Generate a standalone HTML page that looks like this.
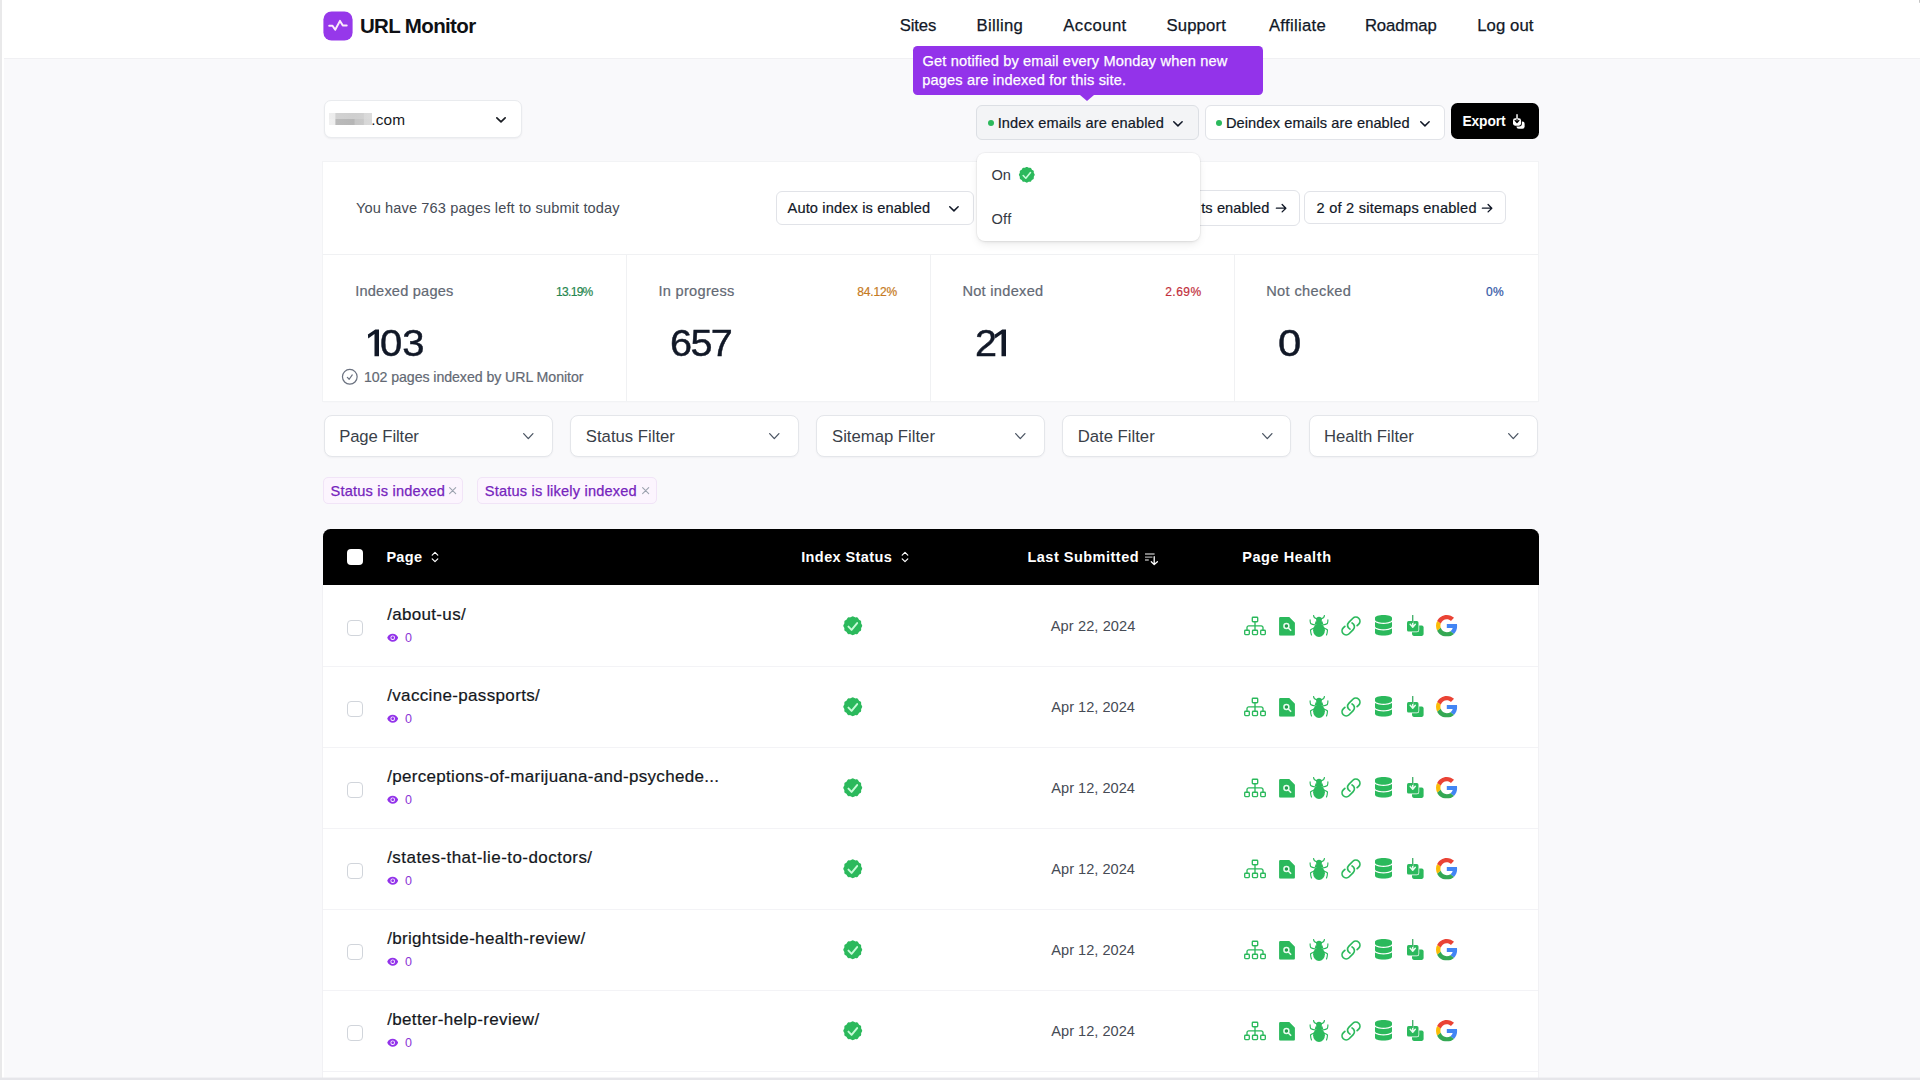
<!DOCTYPE html>
<html lang="en">
<head>
<meta charset="utf-8">
<title>URL Monitor</title>
<style>
*{box-sizing:border-box;margin:0;padding:0}
html,body{width:1920px;height:1080px;overflow:hidden}
body{font-family:"Liberation Sans",sans-serif;background:#f9f9fb;color:#111827;position:relative}
.abs{position:absolute}
.t{position:absolute;white-space:nowrap}
svg{display:block;overflow:visible}
.btn{position:absolute;border:1px solid #e1e3e8;border-radius:6px;background:#fff}
.dot{position:absolute;width:6.4px;height:6.4px;border-radius:50%;background:#2bb95c}
.vdiv{position:absolute;top:254.5px;width:1px;height:146.5px;background:#f0f1f3}
.filt{position:absolute;top:415.4px;width:229px;height:41.6px;border:1px solid #e4e6ea;border-radius:8px;background:#fff;box-shadow:0 1px 2px rgba(16,24,40,.04)}
.chip{position:absolute;top:477.4px;height:27px;border:1px solid #f1e4f7;border-radius:5px;background:#fcf5fe}
.row{position:absolute;left:0;width:1215px;height:81px;border-bottom:1px solid #f3f3f6}
.cb{position:absolute;left:24.100px;top:34.200px;width:15.800px;height:15.800px;border:1px solid #d1d5db;border-radius:4px;background:#fff}
</style>
</head>
<body>

<div class="abs" style="left:0;top:0;width:1920px;height:58.5px;background:#fff;border-bottom:1px solid #f0f0f3"></div>
<div class="abs" style="left:0;top:0;width:2px;height:1080px;background:#e9e9ea"></div>
<div class="abs" style="left:2px;top:0;width:1.700px;height:1078px;background:#fff"></div>
<div class="abs" style="left:1918.600px;top:0;width:1.400px;height:3px;background:#b5b5b5;border-radius:0 0 0 2px;opacity:.8"></div>
<svg class="abs" style="left:323px;top:11px" width="31" height="31" viewBox="0 0 31 31"><rect x=".4" y=".4" width="29.200" height="29.200" rx="8.200" fill="#9638ea"/><path d="M6.200 14.800h3.300l2.700 4 4.800-8.900 2.800 4.700h3.900" fill="none" stroke="#fbe9fb" stroke-width="2" stroke-linecap="round" stroke-linejoin="round"/></svg>
<div class="t" style="left:359.96px;top:12.5px;font-size:20.5px;line-height:26px;color:#0f1115;font-weight:700;letter-spacing:-0.64px;">URL Monitor</div>
<div class="t" style="left:899.63px;top:16.41px;font-size:16.7px;line-height:20px;color:#111827;letter-spacing:-0.09px;-webkit-text-stroke:0.25px #111827;">Sites</div>
<div class="t" style="left:976.53px;top:16.41px;font-size:16.7px;line-height:20px;color:#111827;letter-spacing:0.29px;-webkit-text-stroke:0.25px #111827;">Billing</div>
<div class="t" style="left:1063.3px;top:16.41px;font-size:16.7px;line-height:20px;color:#111827;letter-spacing:0.44px;-webkit-text-stroke:0.25px #111827;">Account</div>
<div class="t" style="left:1166.43px;top:16.41px;font-size:16.7px;line-height:20px;color:#111827;letter-spacing:0.165px;-webkit-text-stroke:0.25px #111827;">Support</div>
<div class="t" style="left:1268.9px;top:16.41px;font-size:16.7px;line-height:20px;color:#111827;letter-spacing:0.3px;-webkit-text-stroke:0.25px #111827;">Affiliate</div>
<div class="t" style="left:1364.93px;top:16.41px;font-size:16.7px;line-height:20px;color:#111827;letter-spacing:-0.1px;-webkit-text-stroke:0.25px #111827;">Roadmap</div>
<div class="t" style="left:1477.13px;top:16.41px;font-size:16.7px;line-height:20px;color:#111827;letter-spacing:0.1px;-webkit-text-stroke:0.25px #111827;">Log out</div>
<div class="btn" style="left:324px;top:99.600px;width:198.300px;height:38.600px;border-radius:7px;border-color:#e9ebee;box-shadow:0 1px 2px rgba(16,24,40,.05)"></div>
<div class="abs" style="left:329.300px;top:113px;width:42.700px;height:6px;background:linear-gradient(90deg,#eeeeee 0,#ececec 14.5%,#d2d2d2 15.5%,#cfcfcf 55%,#d1d1d1 80%,#d9d9d9 82%,#dcdcdc 100%);filter:blur(.4px)"></div>
<div class="abs" style="left:329.300px;top:119px;width:42.700px;height:6px;background:linear-gradient(90deg,#f0f0f0 0,#eeeeee 14.5%,#bababa 15.5%,#b6b6b6 58%,#c6c6c6 61%,#c9c9c9 80%,#d7d7d7 82%,#dadada 100%);filter:blur(.4px)"></div>
<div class="t" style="left:371.3px;top:109.76px;font-size:15.4px;line-height:20px;color:#16181d;letter-spacing:0.1px;">.com</div>
<svg class="abs" style="left:496.0px;top:117.05px" width="10" height="5.9" viewBox="0 0 10 5.9"><path d="M0.85 0.85L5.0 4.84L9.15 0.85" fill="none" stroke="#1a1d23" stroke-width="1.7" stroke-linecap="round" stroke-linejoin="round"/></svg>
<div class="btn" style="left:976.400px;top:105.400px;width:222.800px;height:34.800px;background:#f3f4f6;border-color:#dcdfe4"></div>
<div class="dot" style="left:987.800px;top:119.800px"></div>
<div class="t" style="left:997.68px;top:112.54px;font-size:14.6px;line-height:20px;color:#111827;letter-spacing:0.137px;-webkit-text-stroke:0.2px #111827;">Index emails are enabled</div>
<svg class="abs" style="left:1173.35px;top:121.1px" width="9.9" height="5.8" viewBox="0 0 9.9 5.8"><path d="M0.75 0.75L4.95 4.86L9.15 0.75" fill="none" stroke="#111827" stroke-width="1.5" stroke-linecap="round" stroke-linejoin="round"/></svg>
<div class="btn" style="left:1204.800px;top:105.400px;width:240.400px;height:34.800px"></div>
<div class="dot" style="left:1216px;top:119.800px"></div>
<div class="t" style="left:1225.88px;top:112.54px;font-size:14.6px;line-height:20px;color:#111827;letter-spacing:0.11px;-webkit-text-stroke:0.2px #111827;">Deindex emails are enabled</div>
<svg class="abs" style="left:1419.55px;top:121.1px" width="9.9" height="5.8" viewBox="0 0 9.9 5.8"><path d="M0.75 0.75L4.95 4.86L9.15 0.75" fill="none" stroke="#111827" stroke-width="1.5" stroke-linecap="round" stroke-linejoin="round"/></svg>
<div class="abs" style="left:1451.200px;top:102.900px;width:87.900px;height:35.900px;background:#000;border-radius:6.500px"></div>
<div class="t" style="left:1462.43px;top:111.52px;font-size:13.8px;line-height:20px;color:#fff;font-weight:700;letter-spacing:-0.1px;">Export</div>
<svg class="abs" style="left:1513.200px;top:113.900px" width="11.900" height="14.850" viewBox="0 0 17 21"><rect x="5" y="10.600" width="11.600" height="10.300" rx="3.200" fill="#fff"/><rect x="-1.200" y="4.900" width="13.900" height="12.900" rx="3.800" fill="#000"/><rect x="0" y="6.100" width="11.500" height="10.500" rx="3" fill="#fff"/><path d="M5.750 6.100v5.500M3 9l2.750 3.200L8.500 9" fill="none" stroke="#000" stroke-width="1.800" stroke-linecap="round" stroke-linejoin="round"/><path d="M5.750 .8v5.600" stroke="#fff" stroke-width="2.100" stroke-linecap="round"/></svg>
<div class="abs" style="left:323.300px;top:162px;width:1215.100px;height:239px;background:#fff;box-shadow:0 0 0 1px #f2f3f5,0 1px 2px rgba(16,24,40,.03)"></div>
<div class="abs" style="left:323.300px;top:254px;width:1215.100px;height:1px;background:#f0f1f3"></div>
<div class="vdiv" style="left:625.8px"></div>
<div class="vdiv" style="left:930.1px"></div>
<div class="vdiv" style="left:1234.4px"></div>
<div class="t" style="left:355.9px;top:198.14px;font-size:14.6px;line-height:20px;color:#464b55;letter-spacing:0.121px;">You have 763 pages left to submit today</div>
<div class="btn" style="left:775.700px;top:190.800px;width:198.300px;height:34.200px"></div>
<div class="t" style="left:787.5px;top:198.24px;font-size:14.6px;line-height:20px;color:#111827;letter-spacing:0.153px;-webkit-text-stroke:0.2px #111827;">Auto index is enabled</div>
<svg class="abs" style="left:948.55px;top:205.6px" width="9.9" height="5.8" viewBox="0 0 9.9 5.8"><path d="M0.75 0.75L4.95 4.86L9.15 0.75" fill="none" stroke="#111827" stroke-width="1.5" stroke-linecap="round" stroke-linejoin="round"/></svg>
<div class="btn" style="left:1100px;top:190.300px;width:200px;height:35.300px"></div>
<div class="t" style="left:1201.2px;top:198.34px;font-size:14.6px;line-height:20px;color:#111827;letter-spacing:0.1px;-webkit-text-stroke:0.2px #111827;">ts enabled</div>
<svg class="abs" style="left:1275.25px;top:203.3px" width="12.35" height="10.4" viewBox="-1 -1 12.35 10.4"><path d="M0.4 4.2H9.75M6.15 0.5L9.85 4.2L6.15 7.9" fill="none" stroke="#111827" stroke-width="1.35" stroke-linecap="round" stroke-linejoin="round"/></svg>
<div class="btn" style="left:1304.400px;top:191.250px;width:201.600px;height:32.250px"></div>
<div class="t" style="left:1316.52px;top:198.34px;font-size:14.6px;line-height:20px;color:#111827;letter-spacing:0.23px;-webkit-text-stroke:0.2px #111827;">2 of 2 sitemaps enabled</div>
<svg class="abs" style="left:1481px;top:203.3px" width="12.3" height="10.4" viewBox="-1 -1 12.3 10.4"><path d="M0.4 4.2H9.7M6.1 0.5L9.8 4.2L6.1 7.9" fill="none" stroke="#111827" stroke-width="1.35" stroke-linecap="round" stroke-linejoin="round"/></svg>
<div class="t" style="left:355.18px;top:281.74px;font-size:14.6px;line-height:18px;color:#636974;letter-spacing:0.2px;-webkit-text-stroke:0.2px #636974;">Indexed pages</div>
<div class="t" style="left:658.38px;top:281.74px;font-size:14.6px;line-height:18px;color:#636974;letter-spacing:0.3px;-webkit-text-stroke:0.2px #636974;">In progress</div>
<div class="t" style="left:962.38px;top:281.74px;font-size:14.6px;line-height:18px;color:#636974;letter-spacing:0.293px;-webkit-text-stroke:0.2px #636974;">Not indexed</div>
<div class="t" style="left:1266.18px;top:281.74px;font-size:14.6px;line-height:18px;color:#636974;letter-spacing:0.36px;-webkit-text-stroke:0.2px #636974;">Not checked</div>
<div class="t" style="left:512.6px;width:80px;text-align:right;top:283.64px;font-size:12px;line-height:16px;color:#27874f;letter-spacing:-0.7px;-webkit-text-stroke:0.2px #27874f">13.19%</div>
<div class="t" style="left:817.05px;width:80px;text-align:right;top:283.64px;font-size:12px;line-height:16px;color:#c67a22;letter-spacing:-0.15px;-webkit-text-stroke:0.2px #c67a22">84.12%</div>
<div class="t" style="left:1121.7px;width:80px;text-align:right;top:283.64px;font-size:12px;line-height:16px;color:#c2303c;letter-spacing:0.5px;-webkit-text-stroke:0.2px #c2303c">2.69%</div>
<div class="t" style="left:1424.0px;width:80px;text-align:right;top:283.64px;font-size:12px;line-height:16px;color:#3156a6;letter-spacing:0.3px;-webkit-text-stroke:0.2px #3156a6">0%</div>
<svg class="abs" style="left:367.0px;top:328.7px" width="12.5" height="27.7" viewBox="0 -0.5 12.5 27.7"><path fill="#111827" d="M12.0 0H8.3L0.9000000000000004 5L1.1999999999999993 8.900L7.5 4.600V26.7H12.0z"/></svg>
<div class="t" style="left:380.29px;top:320.74px;font-size:37.400px;line-height:44px;color:#111827;transform:scaleX(1.07);transform-origin:0 0;-webkit-text-stroke:0.45px #111827">03</div>
<div class="t" style="left:670.17px;top:320.74px;font-size:37.400px;line-height:44px;color:#111827;letter-spacing:-1.55px;transform:scaleX(1.06);transform-origin:0 0;-webkit-text-stroke:0.45px #111827">657</div>
<div class="t" style="left:974.79px;top:320.74px;font-size:37.400px;line-height:44px;color:#111827;transform:scaleX(1.06);transform-origin:0 0;-webkit-text-stroke:0.45px #111827">2</div>
<svg class="abs" style="left:994.0px;top:328.7px" width="12.5" height="27.7" viewBox="0 -0.5 12.5 27.7"><path fill="#111827" d="M12.0 0H8.3L0.9000000000000004 5L1.1999999999999993 8.900L7.5 4.600V26.7H12.0z"/></svg>
<div class="t" style="left:1277.91px;top:320.74px;font-size:37.400px;line-height:44px;color:#111827;transform:scaleX(1.12);transform-origin:0 0;-webkit-text-stroke:0.45px #111827">0</div>
<svg class="abs" style="left:340.350px;top:367.200px" width="19.600" height="19.600" viewBox="0 0 24 24"><path d="M9 12.750L11.250 15 15 9.750M21 12a9 9 0 11-18 0 9 9 0 0118 0z" fill="none" stroke="#6b7280" stroke-width="1.500" stroke-linecap="round" stroke-linejoin="round"/></svg>
<div class="t" style="left:363.9px;top:367.78px;font-size:14.2px;line-height:18px;color:#636974;letter-spacing:-0.075px;-webkit-text-stroke:0.2px #636974;">102 pages indexed by URL Monitor</div>
<div class="filt" style="left:323.7px"></div>
<div class="t" style="left:339.13px;top:426.41px;font-size:16.7px;line-height:22px;color:#3a3f49;letter-spacing:-0.09px;">Page Filter</div>
<svg class="abs" style="left:522.9px;top:433.1px" width="10.6" height="6.4" viewBox="0 0 10.6 6.4"><path d="M0.65 0.65L5.3 5.59L9.95 0.65" fill="none" stroke="#4b5563" stroke-width="1.3" stroke-linecap="round" stroke-linejoin="round"/></svg>
<div class="filt" style="left:569.9px"></div>
<div class="t" style="left:585.83px;top:426.41px;font-size:16.7px;line-height:22px;color:#3a3f49;">Status Filter</div>
<svg class="abs" style="left:769.1px;top:433.1px" width="10.6" height="6.4" viewBox="0 0 10.6 6.4"><path d="M0.65 0.65L5.3 5.59L9.95 0.65" fill="none" stroke="#4b5563" stroke-width="1.3" stroke-linecap="round" stroke-linejoin="round"/></svg>
<div class="filt" style="left:816.1px"></div>
<div class="t" style="left:832.03px;top:426.41px;font-size:16.7px;line-height:22px;color:#3a3f49;">Sitemap Filter</div>
<svg class="abs" style="left:1015.3px;top:433.1px" width="10.6" height="6.4" viewBox="0 0 10.6 6.4"><path d="M0.65 0.65L5.3 5.59L9.95 0.65" fill="none" stroke="#4b5563" stroke-width="1.3" stroke-linecap="round" stroke-linejoin="round"/></svg>
<div class="filt" style="left:1062.3px"></div>
<div class="t" style="left:1077.73px;top:426.41px;font-size:16.7px;line-height:22px;color:#3a3f49;">Date Filter</div>
<svg class="abs" style="left:1261.5px;top:433.1px" width="10.6" height="6.4" viewBox="0 0 10.6 6.4"><path d="M0.65 0.65L5.3 5.59L9.95 0.65" fill="none" stroke="#4b5563" stroke-width="1.3" stroke-linecap="round" stroke-linejoin="round"/></svg>
<div class="filt" style="left:1308.5px"></div>
<div class="t" style="left:1323.93px;top:426.41px;font-size:16.7px;line-height:22px;color:#3a3f49;">Health Filter</div>
<svg class="abs" style="left:1507.7px;top:433.1px" width="10.6" height="6.4" viewBox="0 0 10.6 6.4"><path d="M0.65 0.65L5.3 5.59L9.95 0.65" fill="none" stroke="#4b5563" stroke-width="1.3" stroke-linecap="round" stroke-linejoin="round"/></svg>
<div class="chip" style="left:323.300px;width:140.200px"></div>
<div class="t" style="left:330.52px;top:480.54px;font-size:14.6px;line-height:20px;color:#7624bd;letter-spacing:0.2px;-webkit-text-stroke:0.25px #7624bd;">Status is indexed</div>
<div class="chip" style="left:477.300px;width:179.400px"></div>
<div class="t" style="left:484.72px;top:480.54px;font-size:14.6px;line-height:20px;color:#7624bd;letter-spacing:0.19px;-webkit-text-stroke:0.25px #7624bd;">Status is likely indexed</div>
<svg class="abs" style="left:449.3px;top:487.25px" width="7.300" height="7.300" viewBox="0 0 7.300 7.300"><path d="M.6.6l6.100 6.100M6.700.6L.6 6.700" stroke="#9ca3af" stroke-width="1.100" stroke-linecap="round"/></svg>
<svg class="abs" style="left:642.3px;top:487.25px" width="7.300" height="7.300" viewBox="0 0 7.300 7.300"><path d="M.6.6l6.100 6.100M6.700.6L.6 6.700" stroke="#9ca3af" stroke-width="1.100" stroke-linecap="round"/></svg>
<svg width="0" height="0" style="position:absolute">
<defs>
<symbol id="i-badge" viewBox="0 0 24 24"><path fill="#2bb95c" d="M12.00 2.32L12.63 2.45L13.21 2.78L13.76 3.14L14.31 3.38L14.90 3.45L15.56 3.41L16.23 3.42L16.84 3.62L17.32 4.04L17.66 4.62L17.95 5.21L18.31 5.69L18.79 6.05L19.38 6.34L19.96 6.68L20.38 7.16L20.58 7.77L20.59 8.44L20.55 9.10L20.62 9.69L20.86 10.24L21.22 10.79L21.55 11.37L21.68 12.00L21.55 12.63L21.22 13.21L20.86 13.76L20.62 14.31L20.55 14.90L20.59 15.56L20.58 16.23L20.38 16.84L19.96 17.32L19.38 17.66L18.79 17.95L18.31 18.31L17.95 18.79L17.66 19.38L17.32 19.96L16.84 20.38L16.23 20.58L15.56 20.59L14.90 20.55L14.31 20.62L13.76 20.86L13.21 21.22L12.63 21.55L12.00 21.68L11.37 21.55L10.79 21.22L10.24 20.86L9.69 20.62L9.10 20.55L8.44 20.59L7.77 20.58L7.16 20.38L6.68 19.96L6.34 19.38L6.05 18.79L5.69 18.31L5.21 17.95L4.62 17.66L4.04 17.32L3.62 16.84L3.42 16.23L3.41 15.56L3.45 14.90L3.38 14.31L3.14 13.76L2.78 13.21L2.45 12.63L2.32 12.00L2.45 11.37L2.78 10.79L3.14 10.24L3.38 9.69L3.45 9.10L3.41 8.44L3.42 7.77L3.62 7.16L4.04 6.68L4.62 6.34L5.21 6.05L5.69 5.69L6.05 5.21L6.34 4.62L6.68 4.04L7.16 3.62L7.77 3.42L8.44 3.41L9.10 3.45L9.69 3.38L10.24 3.14L10.79 2.78L11.37 2.45z"/><path d="M7.600 12.900l3.200 3.300 5.700-6.900" fill="none" stroke="#c6fbd7" stroke-width="2" stroke-linecap="round" stroke-linejoin="round"/></symbol>
<symbol id="i-eye" viewBox="0 0 20 20"><path fill="#9333ea" d="M10 12.500a2.500 2.500 0 100-5 2.500 2.500 0 000 5z"/><path fill="#9333ea" fill-rule="evenodd" d="M.664 10.590a1.651 1.651 0 010-1.186A10.004 10.004 0 0110 3c4.257 0 7.893 2.660 9.336 6.410.147.381.146.804 0 1.186A10.004 10.004 0 0110 17c-4.257 0-7.893-2.660-9.336-6.410zM14 10a4 4 0 11-8 0 4 4 0 018 0z"/></symbol>
<symbol id="i-sitemap" viewBox="0 0 24 20"><g fill="none" stroke="#2bb95c" stroke-width="1.350" stroke-linejoin="round"><rect x="9.300" y="1.200" width="5.400" height="4.500" rx=".8"/><rect x="1.700" y="14.200" width="4.600" height="4.400" rx=".8"/><rect x="9.500" y="14.200" width="5" height="4.400" rx=".8"/><rect x="17.700" y="14.200" width="4.600" height="4.400" rx=".8"/><path d="M12 5.700v8.500M4 14.200v-2.600a1.700 1.700 0 011.700-1.700h12.600a1.700 1.700 0 011.700 1.700v2.600"/></g></symbol>
<symbol id="i-file" viewBox="0 0 16 19"><path fill="#2bb95c" d="M1.300 0h9L16 5.700v11.900a1.300 1.300 0 01-1.300 1.300H1.300A1.300 1.300 0 010 17.600V1.300A1.300 1.300 0 011.300 0z"/><circle cx="7.400" cy="9.100" r="2.500" fill="#1f9c4a" stroke="#e9fbef" stroke-width="1.500"/><path d="M9.400 11.100l2.300 2.300" stroke="#e9fbef" stroke-width="1.700" stroke-linecap="round"/></symbol>
<symbol id="i-bug" viewBox="0 0 20 22"><g fill="#2bb95c"><circle cx="10" cy="4.700" r="2.900"/><path d="M6.600 6.200h6.800l1 3.200H5.600z"/><ellipse cx="10" cy="15.200" rx="5.900" ry="6.800"/></g><g fill="none" stroke="#2bb95c" stroke-width="1.150" stroke-linecap="round" stroke-linejoin="round"><path d="M7.600 3.600C5.600 3.300 4.700 2.200 4.600.5M12.400 3.600c2-.3 2.900-1.400 3-3.100"/><path d="M6.500 10C4.500 9.800 2.600 9.400 1.700 8.500 1.200 7.400 1.100 6.200 1.100 4.900M13.500 10c2-.2 3.900-.6 4.800-1.500.5-1.100.6-2.300.6-3.600"/><path d="M4.800 13.200c-1.300.4-2.500 1-3.300 1.800.1 1.800.4 3.400 1 5M15.200 13.200c1.300.4 2.500 1 3.300 1.800-.1 1.800-.4 3.400-1 5"/></g></symbol>
<symbol id="i-link" viewBox="0 0 24 24"><path fill="none" stroke="#2bb95c" stroke-width="1.850" stroke-linecap="round" stroke-linejoin="round" d="M13.190 8.688a4.500 4.500 0 011.242 7.244l-4.500 4.500a4.500 4.500 0 01-6.364-6.364l1.757-1.757m13.350-.622l1.757-1.757a4.500 4.500 0 00-6.364-6.364l-4.500 4.500a4.500 4.500 0 001.242 7.244"/></symbol>
<symbol id="i-db" viewBox="0 0 448 512"><path fill="#2bb95c" d="M448 73.143v45.714C448 159.143 347.667 192 224 192S0 159.143 0 118.857V73.143C0 32.857 100.333 0 224 0s224 32.857 224 73.143zM448 176v102.857C448 319.143 347.667 352 224 352S0 319.143 0 278.857V176c48.125 33.143 136.208 48.572 224 48.572S399.874 209.143 448 176zm0 160v102.857C448 479.143 347.667 512 224 512S0 479.143 0 438.857V336c48.125 33.143 136.208 48.572 224 48.572S399.874 369.143 448 336z"/></symbol>
<symbol id="i-dl" viewBox="0 0 17 21"><rect x="5" y="10.600" width="11.600" height="10.300" rx="1.800" fill="#2bb95c"/><rect x="-.7" y="5.400" width="12.900" height="11.900" rx="2.200" fill="#fff"/><rect x="0" y="6.100" width="11.500" height="10.500" rx="1.600" fill="#2bb95c"/><path d="M5.750 6.100v5.500M3.200 9.300l2.550 2.900 2.550-2.900" fill="none" stroke="#e9fbef" stroke-width="1.500" stroke-linecap="round" stroke-linejoin="round"/><path d="M5.750 .3v7.200" stroke="#23a350" stroke-width="1.150" stroke-linecap="round"/></symbol>
<symbol id="i-g" viewBox="0 0 48 48"><path fill="#EA4335" d="M24 9.500c3.540 0 6.710 1.220 9.210 3.600l6.850-6.850C35.900 2.380 30.470 0 24 0 14.620 0 6.510 5.380 2.560 13.220l7.980 6.190C12.430 13.720 17.740 9.500 24 9.500z"/><path fill="#4285F4" d="M46.980 24.550c0-1.570-.15-3.090-.38-4.550H24v9.020h12.940c-.58 2.960-2.260 5.480-4.780 7.180l7.730 6c4.510-4.180 7.090-10.360 7.090-17.650z"/><path fill="#FBBC05" d="M10.530 28.590c-.48-1.450-.76-2.990-.76-4.590s.27-3.140.76-4.590l-7.980-6.190C.92 16.460 0 20.120 0 24c0 3.880.92 7.540 2.560 10.780l7.970-6.190z"/><path fill="#34A853" d="M24 48c6.480 0 11.930-2.130 15.890-5.810l-7.730-6c-2.150 1.450-4.920 2.300-8.160 2.300-6.260 0-11.570-4.220-13.470-9.910l-7.980 6.190C6.510 42.620 14.620 48 24 48z"/></symbol>
<symbol id="i-updown" viewBox="0 0 8 12"><path d="M1.200 4.100L4 1.300l2.800 2.800M1.200 7.900L4 10.700l2.800-2.800" fill="none" stroke="#fff" stroke-width="1.200" stroke-linecap="round" stroke-linejoin="round"/></symbol>
</defs>
</svg>
<div class="abs" style="left:322.500px;top:528.900px;width:1216.500px;height:56px;background:#000;border-radius:7.500px 7.500px 0 0"></div>
<div class="abs" style="left:347px;top:549px;width:16px;height:16px;background:#fff;border-radius:4px"></div>
<div class="t" style="left:386.4px;top:547.88px;font-size:14.5px;line-height:18px;color:#fff;font-weight:700;letter-spacing:0.3px;">Page</div>
<div class="t" style="left:801.2px;top:547.88px;font-size:14.5px;line-height:18px;color:#fff;font-weight:700;letter-spacing:0.4px;">Index Status</div>
<div class="t" style="left:1027.4px;top:547.88px;font-size:14.5px;line-height:18px;color:#fff;font-weight:700;letter-spacing:0.5px;">Last Submitted</div>
<div class="t" style="left:1242.2px;top:547.88px;font-size:14.5px;line-height:18px;color:#fff;font-weight:700;letter-spacing:0.58px;">Page Health</div>
<svg class="abs" style="left:431px;top:551.200px" width="8" height="12"><use href="#i-updown"/></svg>
<svg class="abs" style="left:901.3px;top:551.200px" width="8" height="12"><use href="#i-updown"/></svg>
<svg class="abs" style="left:1144px;top:552px" width="15" height="14" viewBox="0 0 15 14"><path d="M1 2h9.600M1 5.100h7.500M1 8h3.750" stroke="#a8a8a8" stroke-width="1.300" fill="none"/><path d="M10.200 4.700v7.400M7.300 9.800l2.900 2.800 3.200-2.800" stroke="#fff" stroke-width="1.300" fill="none" stroke-linecap="round" stroke-linejoin="round"/></svg>
<div class="abs" style="left:322px;top:585px;width:1217px;height:495px;background:#fff;border-left:1px solid #f1f1f4;border-right:1px solid #f1f1f4;overflow:hidden">
<div class="row" style="top:1px">
<div class="cb"></div>
<div class="t" style="left:64.2px;top:18.11px;font-size:17px;line-height:22px;color:#14171c;letter-spacing:0.32px;-webkit-text-stroke:0.2px #14171c">/about-us/</div>
<svg class="abs" style="left:64.3px;top:46.400px" width="11.400" height="11.400"><use href="#i-eye"/></svg>
<div class="t" style="left:81.9px;top:43.77px;font-size:12.500px;line-height:16px;color:#8b35d6">0</div>
<svg class="abs" style="left:518.4px;top:28.150px" width="23.500" height="23.500"><use href="#i-badge"/></svg>
<div class="t" style="left:670.15px;width:200px;text-align:center;top:30.04px;font-size:14.600px;line-height:20px;color:#464b55;letter-spacing:0.1px">Apr 22, 2024</div>
<svg class="abs" style="left:920.0px;top:30px" width="24" height="20"><use href="#i-sitemap"/></svg>
<svg class="abs" style="left:956.1px;top:30.800px" width="16" height="18.800"><use href="#i-file"/></svg>
<svg class="abs" style="left:986.0px;top:28.700px" width="20" height="22"><use href="#i-bug"/></svg>
<svg class="abs" style="left:1016.9px;top:29.050px" width="22" height="22"><use href="#i-link"/></svg>
<svg class="abs" style="left:1051.6px;top:29.400px" width="17" height="20.700" preserveAspectRatio="none" viewBox="0 0 448 512"><use href="#i-db"/></svg>
<svg class="abs" style="left:1083.75px;top:29.400px" width="17" height="21"><use href="#i-dl"/></svg>
<svg class="abs" style="left:1112.8px;top:29px" width="21.600" height="21.600"><use href="#i-g"/></svg>
</div>
<div class="row" style="top:82px">
<div class="cb"></div>
<div class="t" style="left:64.2px;top:18.11px;font-size:17px;line-height:22px;color:#14171c;letter-spacing:0.34px;-webkit-text-stroke:0.2px #14171c">/vaccine-passports/</div>
<svg class="abs" style="left:64.3px;top:46.400px" width="11.400" height="11.400"><use href="#i-eye"/></svg>
<div class="t" style="left:81.9px;top:43.77px;font-size:12.500px;line-height:16px;color:#8b35d6">0</div>
<svg class="abs" style="left:518.4px;top:28.150px" width="23.500" height="23.500"><use href="#i-badge"/></svg>
<div class="t" style="left:670.1px;width:200px;text-align:center;top:30.04px;font-size:14.600px;line-height:20px;color:#464b55;letter-spacing:0px">Apr 12, 2024</div>
<svg class="abs" style="left:920.0px;top:30px" width="24" height="20"><use href="#i-sitemap"/></svg>
<svg class="abs" style="left:956.1px;top:30.800px" width="16" height="18.800"><use href="#i-file"/></svg>
<svg class="abs" style="left:986.0px;top:28.700px" width="20" height="22"><use href="#i-bug"/></svg>
<svg class="abs" style="left:1016.9px;top:29.050px" width="22" height="22"><use href="#i-link"/></svg>
<svg class="abs" style="left:1051.6px;top:29.400px" width="17" height="20.700" preserveAspectRatio="none" viewBox="0 0 448 512"><use href="#i-db"/></svg>
<svg class="abs" style="left:1083.75px;top:29.400px" width="17" height="21"><use href="#i-dl"/></svg>
<svg class="abs" style="left:1112.8px;top:29px" width="21.600" height="21.600"><use href="#i-g"/></svg>
</div>
<div class="row" style="top:163px">
<div class="cb"></div>
<div class="t" style="left:64.2px;top:18.11px;font-size:17px;line-height:22px;color:#14171c;letter-spacing:0.31px;-webkit-text-stroke:0.2px #14171c">/perceptions-of-marijuana-and-psychede...</div>
<svg class="abs" style="left:64.3px;top:46.400px" width="11.400" height="11.400"><use href="#i-eye"/></svg>
<div class="t" style="left:81.9px;top:43.77px;font-size:12.500px;line-height:16px;color:#8b35d6">0</div>
<svg class="abs" style="left:518.4px;top:28.150px" width="23.500" height="23.500"><use href="#i-badge"/></svg>
<div class="t" style="left:670.1px;width:200px;text-align:center;top:30.04px;font-size:14.600px;line-height:20px;color:#464b55;letter-spacing:0px">Apr 12, 2024</div>
<svg class="abs" style="left:920.0px;top:30px" width="24" height="20"><use href="#i-sitemap"/></svg>
<svg class="abs" style="left:956.1px;top:30.800px" width="16" height="18.800"><use href="#i-file"/></svg>
<svg class="abs" style="left:986.0px;top:28.700px" width="20" height="22"><use href="#i-bug"/></svg>
<svg class="abs" style="left:1016.9px;top:29.050px" width="22" height="22"><use href="#i-link"/></svg>
<svg class="abs" style="left:1051.6px;top:29.400px" width="17" height="20.700" preserveAspectRatio="none" viewBox="0 0 448 512"><use href="#i-db"/></svg>
<svg class="abs" style="left:1083.75px;top:29.400px" width="17" height="21"><use href="#i-dl"/></svg>
<svg class="abs" style="left:1112.8px;top:29px" width="21.600" height="21.600"><use href="#i-g"/></svg>
</div>
<div class="row" style="top:244px">
<div class="cb"></div>
<div class="t" style="left:64.2px;top:18.11px;font-size:17px;line-height:22px;color:#14171c;letter-spacing:0.45px;-webkit-text-stroke:0.2px #14171c">/states-that-lie-to-doctors/</div>
<svg class="abs" style="left:64.3px;top:46.400px" width="11.400" height="11.400"><use href="#i-eye"/></svg>
<div class="t" style="left:81.9px;top:43.77px;font-size:12.500px;line-height:16px;color:#8b35d6">0</div>
<svg class="abs" style="left:518.4px;top:28.150px" width="23.500" height="23.500"><use href="#i-badge"/></svg>
<div class="t" style="left:670.1px;width:200px;text-align:center;top:30.04px;font-size:14.600px;line-height:20px;color:#464b55;letter-spacing:0px">Apr 12, 2024</div>
<svg class="abs" style="left:920.0px;top:30px" width="24" height="20"><use href="#i-sitemap"/></svg>
<svg class="abs" style="left:956.1px;top:30.800px" width="16" height="18.800"><use href="#i-file"/></svg>
<svg class="abs" style="left:986.0px;top:28.700px" width="20" height="22"><use href="#i-bug"/></svg>
<svg class="abs" style="left:1016.9px;top:29.050px" width="22" height="22"><use href="#i-link"/></svg>
<svg class="abs" style="left:1051.6px;top:29.400px" width="17" height="20.700" preserveAspectRatio="none" viewBox="0 0 448 512"><use href="#i-db"/></svg>
<svg class="abs" style="left:1083.75px;top:29.400px" width="17" height="21"><use href="#i-dl"/></svg>
<svg class="abs" style="left:1112.8px;top:29px" width="21.600" height="21.600"><use href="#i-g"/></svg>
</div>
<div class="row" style="top:325px">
<div class="cb"></div>
<div class="t" style="left:64.2px;top:18.11px;font-size:17px;line-height:22px;color:#14171c;letter-spacing:0.32px;-webkit-text-stroke:0.2px #14171c">/brightside-health-review/</div>
<svg class="abs" style="left:64.3px;top:46.400px" width="11.400" height="11.400"><use href="#i-eye"/></svg>
<div class="t" style="left:81.9px;top:43.77px;font-size:12.500px;line-height:16px;color:#8b35d6">0</div>
<svg class="abs" style="left:518.4px;top:28.150px" width="23.500" height="23.500"><use href="#i-badge"/></svg>
<div class="t" style="left:670.1px;width:200px;text-align:center;top:30.04px;font-size:14.600px;line-height:20px;color:#464b55;letter-spacing:0px">Apr 12, 2024</div>
<svg class="abs" style="left:920.0px;top:30px" width="24" height="20"><use href="#i-sitemap"/></svg>
<svg class="abs" style="left:956.1px;top:30.800px" width="16" height="18.800"><use href="#i-file"/></svg>
<svg class="abs" style="left:986.0px;top:28.700px" width="20" height="22"><use href="#i-bug"/></svg>
<svg class="abs" style="left:1016.9px;top:29.050px" width="22" height="22"><use href="#i-link"/></svg>
<svg class="abs" style="left:1051.6px;top:29.400px" width="17" height="20.700" preserveAspectRatio="none" viewBox="0 0 448 512"><use href="#i-db"/></svg>
<svg class="abs" style="left:1083.75px;top:29.400px" width="17" height="21"><use href="#i-dl"/></svg>
<svg class="abs" style="left:1112.8px;top:29px" width="21.600" height="21.600"><use href="#i-g"/></svg>
</div>
<div class="row" style="top:406px">
<div class="cb"></div>
<div class="t" style="left:64.2px;top:18.11px;font-size:17px;line-height:22px;color:#14171c;letter-spacing:0.34px;-webkit-text-stroke:0.2px #14171c">/better-help-review/</div>
<svg class="abs" style="left:64.3px;top:46.400px" width="11.400" height="11.400"><use href="#i-eye"/></svg>
<div class="t" style="left:81.9px;top:43.77px;font-size:12.500px;line-height:16px;color:#8b35d6">0</div>
<svg class="abs" style="left:518.4px;top:28.150px" width="23.500" height="23.500"><use href="#i-badge"/></svg>
<div class="t" style="left:670.1px;width:200px;text-align:center;top:30.04px;font-size:14.600px;line-height:20px;color:#464b55;letter-spacing:0px">Apr 12, 2024</div>
<svg class="abs" style="left:920.0px;top:30px" width="24" height="20"><use href="#i-sitemap"/></svg>
<svg class="abs" style="left:956.1px;top:30.800px" width="16" height="18.800"><use href="#i-file"/></svg>
<svg class="abs" style="left:986.0px;top:28.700px" width="20" height="22"><use href="#i-bug"/></svg>
<svg class="abs" style="left:1016.9px;top:29.050px" width="22" height="22"><use href="#i-link"/></svg>
<svg class="abs" style="left:1051.6px;top:29.400px" width="17" height="20.700" preserveAspectRatio="none" viewBox="0 0 448 512"><use href="#i-db"/></svg>
<svg class="abs" style="left:1083.75px;top:29.400px" width="17" height="21"><use href="#i-dl"/></svg>
<svg class="abs" style="left:1112.8px;top:29px" width="21.600" height="21.600"><use href="#i-g"/></svg>
</div>
<div class="row" style="top:487px">
</div>
</div>
<div class="abs" style="left:913.100px;top:45.900px;width:350px;height:48.800px;background:#9333ea;border-radius:4.500px"></div>
<div class="abs" style="left:1080px;top:94.500px;width:0;height:0;border-left:7.700px solid transparent;border-right:7.700px solid transparent;border-top:6.900px solid #9333ea"></div>
<div class="t" style="left:922.6px;top:51.64px;font-size:14.6px;line-height:19.3px;color:#fff;letter-spacing:0.145px;-webkit-text-stroke:0.25px #fff;">Get notified by email every Monday when new</div>
<div class="t" style="left:922.2px;top:70.79px;font-size:14.6px;line-height:19.3px;color:#fff;letter-spacing:0.165px;-webkit-text-stroke:0.25px #fff;">pages are indexed for this site.</div>
<div class="abs" style="left:976.700px;top:153px;width:223.100px;height:87.600px;background:#fff;border-radius:8px;box-shadow:0 4px 10px -2px rgba(0,0,0,.10),0 1px 3px rgba(0,0,0,.06),0 0 0 1px rgba(0,0,0,.03)"></div>
<div class="t" style="left:991.42px;top:164.64px;font-size:14.6px;line-height:20px;color:#343943;letter-spacing:0.1px;">On</div>
<svg class="abs" style="left:1017.400px;top:165.200px" width="19.600" height="19.600"><use href="#i-badge"/></svg>
<div class="t" style="left:991.42px;top:209.24px;font-size:14.6px;line-height:20px;color:#343943;letter-spacing:0.3px;">Off</div>
<div class="abs" style="left:0;top:1078px;width:1920px;height:2px;background:#e6e6ea"></div>
<div class="abs" style="left:0;top:1077px;width:1920px;height:1px;background:#e6e6ea;opacity:.45"></div>
</body>
</html>
